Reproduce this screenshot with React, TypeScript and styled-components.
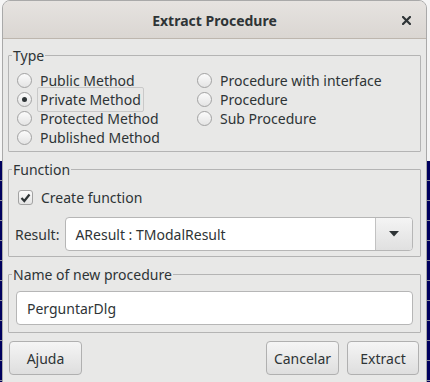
import React from "react";
import styled, { createGlobalStyle } from "styled-components";

const GlobalStyle = createGlobalStyle`
  html, body { margin: 0; padding: 0; }
  body { font-family: "Noto Sans", "DejaVu Sans", sans-serif; }
  * { box-sizing: border-box; }
`;

const Desktop = styled.div`
  width: 430px;
  height: 382px;
  overflow: hidden;
  background:
    linear-gradient(#f5f5f5, #f5f5f5) top left / 100% 161px no-repeat,
    repeating-linear-gradient(to bottom, #8b8ba0 0 1px, #00005e 1px 20px);
`;

const Window = styled.div`
  margin-left: 2px;
  width: 425px;
  height: 400px;
  border: 1px solid #a9a9a9;
  border-radius: 8px 8px 0 0;
  background: #e8e8e7;
  display: flex;
  flex-direction: column;
  color: #2e3436;
  font-size: 14px;
`;

const TitleBar = styled.div`
  height: 38px;
  flex: none;
  border-bottom: 1px solid #bdb6ae;
  border-radius: 7px 7px 0 0;
  background: linear-gradient(#e6e3e0, #dad6d2);
  display: flex;
  align-items: center;
  justify-content: center;
  position: relative;
`;

const Title = styled.div`
  font-weight: bold;
  font-size: 14px;
  color: #2e3436;
  padding-top: 1px;
`;

const CloseButton = styled.div`
  position: absolute;
  right: 15px;
  top: 15px;
  width: 9px;
  height: 9px;
  display: flex;
`;

const Body = styled.div`
  padding: 8px 5px 0 5px;
  display: flex;
  flex-direction: column;
  gap: 9px;
`;

const Group = styled.fieldset`
  margin: 0;
  padding: 0;
  border: 1px solid #b4b4b4;
  border-radius: 1px;
  min-width: 0;
`;

const Legend = styled.legend`
  margin-left: 3px;
  padding: 0 1px;
  font-size: 14px;
  line-height: 17px;
  color: #2e3436;
`;

const GroupContent = styled.div<{ $pt: number; $pb: number; $pl: number }>`
  padding: ${(p) => p.$pt}px 7px ${(p) => p.$pb}px ${(p) => p.$pl}px;
  display: flex;
  flex-direction: column;
`;

const RadioGrid = styled.div`
  display: grid;
  grid-template-columns: 180px 1fr;
  grid-auto-flow: column;
  grid-template-rows: repeat(4, 19px);
`;

const OptionRow = styled.label`
  display: flex;
  align-items: center;
  gap: 8px;
  height: 19px;
  white-space: nowrap;
`;

const RadioCircle = styled.span<{ $checked?: boolean }>`
  width: 15px;
  height: 15px;
  flex: none;
  border-radius: 50%;
  border: 1px solid #a2a2a2;
  background: linear-gradient(#fbfbfb, #e4e4e4);
  display: flex;
  align-items: center;
  justify-content: center;
  &::after {
    content: "";
    display: ${(p) => (p.$checked ? "block" : "none")};
    width: 5px;
    height: 5px;
    border-radius: 50%;
    background: #2e3436;
  }
`;

const OptionText = styled.span<{ $focused?: boolean }>`
  position: relative;
  &::after {
    content: "";
    display: ${(p) => (p.$focused ? "block" : "none")};
    position: absolute;
    left: -3px;
    right: -3px;
    top: -3px;
    bottom: -3px;
    border: 1px solid #c9c9c9;
    border-radius: 2px;
  }
`;

const CheckRow = styled(OptionRow)`
  margin-left: 3px;
  margin-bottom: 10px;
`;

const CheckBox = styled.span`
  width: 15px;
  height: 15px;
  flex: none;
  border-radius: 3px;
  border: 1px solid #a2a2a2;
  background: linear-gradient(#fbfbfb, #e4e4e4);
  display: flex;
  align-items: center;
  justify-content: center;
`;

const FieldRow = styled.div`
  display: flex;
  align-items: center;
  gap: 6px;
`;

const Combo = styled.div`
  flex: 1;
  height: 34px;
  display: flex;
  border: 1px solid #b6b6b6;
  border-radius: 4px;
  overflow: hidden;
  background: #fff;
`;

const ComboValue = styled.div`
  flex: 1;
  display: flex;
  align-items: center;
  padding-left: 9px;
`;

const ComboButton = styled.div`
  width: 37px;
  flex: none;
  border-left: 1px solid #c2c2c2;
  background: linear-gradient(#f4f4f4, #e0e0e0);
  display: flex;
  align-items: center;
  justify-content: center;
`;

const TextInput = styled.div`
  height: 34px;
  border: 1px solid #b6b6b6;
  border-radius: 4px;
  background: #fff;
  display: flex;
  align-items: center;
  padding-left: 10px;
`;

const ButtonRow = styled.div`
  display: flex;
  gap: 8px;
  padding: 0 2px 0 1px;
  margin-top: -1px;
`;

const Spacer = styled.div`
  flex: 1;
`;

const Button = styled.div<{ $w: number }>`
  width: ${(p) => p.$w}px;
  height: 34px;
  border: 1px solid #b0b0b0;
  border-radius: 4px;
  background: linear-gradient(#f5f5f5, #dedede);
  display: flex;
  align-items: center;
  justify-content: center;
  color: #2e3436;
`;

export default function App() {
  return (
    <>
      <GlobalStyle />
      <Desktop>
        <Window>
          <TitleBar>
            <Title>Extract Procedure</Title>
            <CloseButton>
              <svg width="9" height="9" viewBox="0 0 9 9">
                <path d="M1 1 L8 8 M8 1 L1 8" stroke="#2e3436" strokeWidth="2.2" strokeLinecap="square" />
              </svg>
            </CloseButton>
          </TitleBar>
          <Body>
            <Group>
              <Legend>Type</Legend>
              <GroupContent $pt={7} $pb={4} $pl={8}>
                <RadioGrid>
                  <OptionRow><RadioCircle /><OptionText>Public Method</OptionText></OptionRow>
                  <OptionRow><RadioCircle $checked /><OptionText $focused>Private Method</OptionText></OptionRow>
                  <OptionRow><RadioCircle /><OptionText>Protected Method</OptionText></OptionRow>
                  <OptionRow><RadioCircle /><OptionText>Published Method</OptionText></OptionRow>
                  <OptionRow><RadioCircle /><OptionText>Procedure with interface</OptionText></OptionRow>
                  <OptionRow><RadioCircle /><OptionText>Procedure</OptionText></OptionRow>
                  <OptionRow><RadioCircle /><OptionText>Sub Procedure</OptionText></OptionRow>
                </RadioGrid>
              </GroupContent>
            </Group>
            <Group>
              <Legend>Function</Legend>
              <GroupContent $pt={10} $pb={5} $pl={6}>
                <CheckRow>
                  <CheckBox>
                    <svg width="11" height="10" viewBox="0 0 11 10">
                      <path d="M1.5 5 L4.3 8 L9.5 1.5" fill="none" stroke="#2e3436" strokeWidth="2.2" />
                    </svg>
                  </CheckBox>
                  <span>Create function</span>
                </CheckRow>
                <FieldRow>
                  <span>Result:</span>
                  <Combo>
                    <ComboValue>AResult : TModalResult</ComboValue>
                    <ComboButton>
                      <svg width="10" height="6" viewBox="0 0 10 6">
                        <path d="M0 0 H10 L5 5.5 Z" fill="#2e3436" />
                      </svg>
                    </ComboButton>
                  </Combo>
                </FieldRow>
              </GroupContent>
            </Group>
            <Group>
              <Legend>Name of new procedure</Legend>
              <GroupContent $pt={8} $pb={7} $pl={7}>
                <TextInput>PerguntarDlg</TextInput>
              </GroupContent>
            </Group>
            <ButtonRow>
              <Button $w={73}>Ajuda</Button>
              <Spacer />
              <Button $w={73}>Cancelar</Button>
              <Button $w={72}>Extract</Button>
            </ButtonRow>
          </Body>
        </Window>
      </Desktop>
    </>
  );
}
